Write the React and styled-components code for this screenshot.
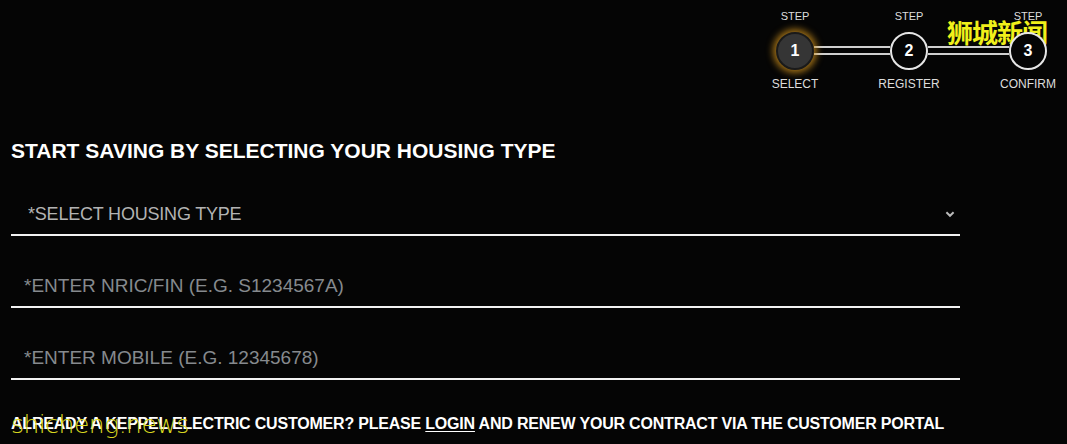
import React from "react";
import styled, { createGlobalStyle } from "styled-components";

const GlobalStyle = createGlobalStyle`
  html, body {
    margin: 0;
    padding: 0;
    background: #050505;
  }
  body {
    font-family: "Liberation Sans", Arial, sans-serif;
    color: #fff;
  }
`;

const steps = [
  { n: 1, label: "SELECT", active: true },
  { n: 2, label: "REGISTER" },
  { n: 3, label: "CONFIRM" },
];

const App = () => {
  return (
    <>
      <GlobalStyle />
      <Page>
        <Header>
          <Stepper>
            {steps.map((s, i) => (
              <React.Fragment key={s.n}>
                {i > 0 && <Connector $wide={i === 2} />}
                <Step>
                  <StepTop>STEP</StepTop>
                  <Circle $active={s.active}>{s.n}</Circle>
                  <StepLabel>{s.label}</StepLabel>
                </Step>
              </React.Fragment>
            ))}
          </Stepper>
        </Header>

        <Form>
          <Title>START SAVING BY SELECTING YOUR HOUSING TYPE</Title>
          <Field $first>
            <SelectText>*SELECT HOUSING TYPE</SelectText>
            <Chevron viewBox="0 0 10 10">
              <path d="M2 3.5 L5 6.5 L8 3.5" fill="none" stroke="#bbb" strokeWidth="1.6" />
            </Chevron>
          </Field>
          <Field>
            <Placeholder>*ENTER NRIC/FIN (E.G. S1234567A)</Placeholder>
          </Field>
          <Field>
            <Placeholder>*ENTER MOBILE (E.G. 12345678)</Placeholder>
          </Field>
          <Note>
            ALREADY A KEPPEL ELECTRIC CUSTOMER? PLEASE <u>LOGIN</u> AND RENEW YOUR
            CONTRACT VIA THE CUSTOMER PORTAL
          </Note>
        </Form>

        <MarkTop>狮城新闻</MarkTop>
        <MarkBottom>shicheng.news</MarkBottom>
      </Page>
    </>
  );
};

export default App;

const Page = styled.div`
  position: relative;
  width: 1067px;
  height: 444px;
  overflow: hidden;
  background: #050505;
`;

const Header = styled.div`
  display: flex;
  justify-content: flex-end;
  padding: 10px 20px 0 0;
  height: 90px;
  box-sizing: border-box;
`;

const Stepper = styled.div`
  display: flex;
  align-items: flex-start;
`;

const Step = styled.div`
  width: 38px;
  display: flex;
  flex-direction: column;
  align-items: center;
`;

const StepTop = styled.div`
  font-size: 11px;
  color: #ddd;
  height: 13px;
  line-height: 13px;
  white-space: nowrap;
  margin-bottom: 9px;
`;

const Circle = styled.div`
  width: 38px;
  height: 38px;
  box-sizing: border-box;
  border-radius: 50%;
  border: 2px solid ${(p) => (p.$active ? "#1a1a1a" : "#e6e6e6")};
  background: ${(p) => (p.$active ? "#353535" : "#050505")};
  box-shadow: ${(p) =>
    p.$active ? "0 0 7px 3px rgba(214, 150, 30, 0.75)" : "none"};
  display: flex;
  align-items: center;
  justify-content: center;
  font-weight: 700;
  font-size: 16px;
  color: #fff;
  position: relative;
  z-index: 1;
`;

const StepLabel = styled.div`
  font-size: 12px;
  color: #ddd;
  white-space: nowrap;
  margin-top: 7px;
`;

const Connector = styled.div`
  width: ${(p) => (p.$wide ? "81px" : "76px")};
  height: 5px;
  margin-top: 36px;
  border-top: 2px solid #cfcfcf;
  border-bottom: 2px solid #cfcfcf;
`;

const Form = styled.div`
  width: 949px;
  margin-left: 11px;
  display: flex;
  flex-direction: column;
`;

const Title = styled.h1`
  margin: 49px 0 0;
  font-size: 21px;
  font-weight: 700;
  letter-spacing: 0;
  line-height: 24px;
  color: #fff;
`;

const Field = styled.div`
  height: ${(p) => (p.$first ? "61px" : "72px")};
  margin-top: ${(p) => (p.$first ? "12px" : "0")};
  border-bottom: 2px solid #f2f2f2;
  display: flex;
  align-items: flex-end;
  justify-content: space-between;
  box-sizing: border-box;
  padding-bottom: 9px;
`;

const SelectText = styled.span`
  font-size: 18px;
  line-height: 22px;
  color: #b3b3b3;
  padding-left: 17px;
  letter-spacing: -0.2px;
`;

const Placeholder = styled.span`
  font-size: 19px;
  line-height: 22px;
  color: #868a8e;
  padding-left: 13px;
`;

const Chevron = styled.svg`
  width: 12px;
  height: 12px;
  margin-right: 4px;
  margin-bottom: 5px;
`;

const Note = styled.p`
  margin: 35px 0 0;
  font-size: 16px;
  line-height: 18px;
  font-weight: 700;
  letter-spacing: -0.2px;
  color: #fff;
  white-space: nowrap;
  u {
    text-decoration-thickness: 1px;
    text-underline-offset: 2px;
  }
`;

const MarkTop = styled.div`
  position: absolute;
  left: 947px;
  top: 13px;
  font-family: "Noto Sans CJK SC", sans-serif;
  font-size: 26px;
  font-weight: 700;
  color: #f0f01a;
  letter-spacing: -1px;
`;

const MarkBottom = styled.div`
  position: absolute;
  left: 11px;
  top: 410px;
  font-family: "DejaVu Sans", sans-serif;
  font-size: 25px;
  font-weight: 300;
  color: #d8d820;
  letter-spacing: -0.5px;
`;
